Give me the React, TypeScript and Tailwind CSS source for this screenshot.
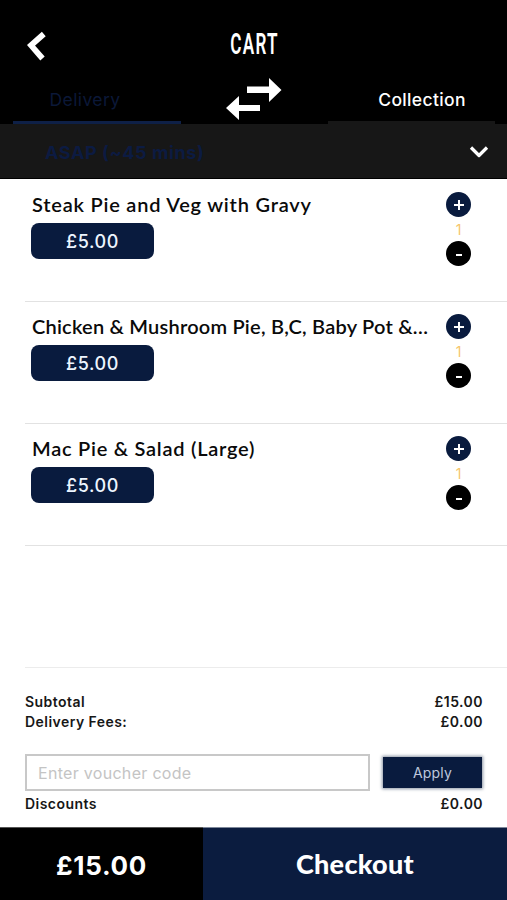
import React from "react";

type Item = { name: string; price: string; qty: number; spacing: string };

const items: Item[] = [
  { name: "Steak Pie and Veg with Gravy", price: "£5.00", qty: 1, spacing: "tracking-[0.78px]" },
  { name: "Chicken & Mushroom Pie, B,C, Baby Pot &…", price: "£5.00", qty: 1, spacing: "tracking-[0.22px]" },
  { name: "Mac Pie & Salad (Large)", price: "£5.00", qty: 1, spacing: "tracking-[0.74px]" },
];

function Header() {
  return (
    <header className="flex h-[124px] flex-col bg-black text-white">
      <div className="grid h-[76px] grid-cols-[203px_101px_203px] pt-[31px]">
        <button aria-label="Back" className="ml-[27px] h-[31px] w-[20px]">
          <svg width="20" height="31" viewBox="0 0 20 31">
            <path d="M16.800 3 4 14.300 15.500 27.500" fill="none" stroke="white" strokeWidth="5.800" />
          </svg>
        </button>
        <h1 className="flex h-[25px] items-center justify-center whitespace-nowrap font-['Roboto',sans-serif] text-[30px] leading-[25px] font-semibold">
          <span className="ml-[1px] inline-block scale-x-[0.57] tracking-[2.2px]">CART</span>
        </h1>
      </div>
      <div className="flex h-[48px] justify-between pr-[12px] pl-[13px] font-['Inter',sans-serif]">
        <button className="w-[168px] border-b-3 border-[#0e2047] pt-[5px] pr-[24px] pb-[1px] text-center text-[17.500px] tracking-[0.4px] text-[#0b1838]">
          Delivery
        </button>
        <svg className="ml-[-2px]" width="58" height="46" viewBox="0 0 58 46">
          <path d="M22 10.5h22V2l12.500 12-12.500 12v-9H22ZM35 35H14v9L1 32l13-12v9h21Z" fill="white" />
        </svg>
        <button className="w-[167px] border-b-3 border-[#171717] pt-[5px] pb-[1px] pl-[21px] text-center text-[17.500px] font-medium tracking-[0.35px]">
          Collection
        </button>
      </div>
    </header>
  );
}

function ItemRow({ item }: { item: Item }) {
  return (
    <li className="ml-[25px] flex h-[122px] justify-between border-b border-[#e2e2e2] pr-[36px] pl-[6px]">
      <div className="pt-[12px]">
        <h2 className={`h-[31px] whitespace-nowrap pl-px font-['Lato',sans-serif] text-[20px] leading-[25px] font-semibold text-[#0a0a0a] ${item.spacing}`}>
          {item.name}
        </h2>
        <div className="flex h-[36px] w-[123px] items-center justify-center rounded-[8px] bg-[#091b3e] font-['Inter',sans-serif] text-[18px] font-medium tracking-[0.6px] text-[#edf5ff]">
          {item.price}
        </div>
      </div>
      <div className="flex w-[25px] flex-col items-center pt-[12px]">
        <button aria-label="Add" className="flex size-[25px] items-center justify-center rounded-full bg-[#091b3e]">
          <svg width="12" height="12" viewBox="0 0 12 12">
            <path d="M1 6h10M6 1v10" stroke="white" strokeWidth="2" />
          </svg>
        </button>
        <span className="flex h-[24px] items-center font-['Inter',sans-serif] text-[14px] text-[#f6c66b]">{item.qty}</span>
        <button aria-label="Remove" className="flex size-[25px] items-center justify-center rounded-full bg-black pt-[2px]">
          <span className="h-[2px] w-[6px] bg-white" />
        </button>
      </div>
    </li>
  );
}

function SummaryRow({ label, value }: { label: string; value: string }) {
  return (
    <div className="flex h-[20px] items-center justify-between font-['Inter',sans-serif] text-[14px] leading-[20px] font-semibold tracking-[0.45px] text-[#171717]">
      <span>{label}</span>
      <span>{value}</span>
    </div>
  );
}

export default function App() {
  return (
    <main className="flex h-[900px] w-[507px] flex-col overflow-hidden bg-white">
      <Header />
      <div className="flex h-[55px] items-center justify-between border-b border-black bg-[#171717] pt-[2px] pr-[17px] pl-[45px]">
        <span className="font-['Inter',sans-serif] text-[18px] font-bold tracking-[0.6px] text-[#0c1b42]">ASAP (~45 mins)</span>
        <svg width="22" height="14" viewBox="0 0 22 14">
          <path d="m3 2.500 8 8 8-8" fill="none" stroke="white" strokeWidth="3.200" strokeLinejoin="round" />
        </svg>
      </div>
      <ul className="h-[489px] pt-px">
        {items.map((item) => (
          <ItemRow key={item.name} item={item} />
        ))}
        <li className="ml-[25px] h-[122px] border-b border-[#ececec]" />
      </ul>
      <section className="flex h-[159px] flex-col pt-[24px] pr-[24px] pl-[25px]">
        <SummaryRow label="Subtotal" value="£15.00" />
        <SummaryRow label="Delivery Fees:" value="£0.00" />
        <div className="mt-[22px] mb-[3px] flex h-[37px] items-center justify-between pr-px font-['Inter',sans-serif]">
          <input
            className="h-[37px] w-[345px] border-2 border-[#c8c8c8] px-[11px] text-[16px] tracking-[0.3px] placeholder:text-[#c4c4c4]"
            placeholder="Enter voucher code"
          />
          <button className="h-[31px] w-[99px] bg-[#091b3e] text-[14px] tracking-[0.2px] text-[#bdc7dd] shadow-[0_0_3px_1px_#8a94a3]">Apply</button>
        </div>
        <SummaryRow label="Discounts" value="£0.00" />
      </section>
      <footer className="flex h-[73px] text-white">
        <div className="flex w-[203px] items-center justify-center border-t border-[#555555] bg-black pt-[2px] font-['Inter',sans-serif] text-[26px] font-bold tracking-[0.7px]">£15.00</div>
        <button className="flex flex-1 items-center justify-center border-t border-[#7d8799] bg-[#0b1c3f] font-['Lato',sans-serif] text-[27px] font-black tracking-[0.3px]">Checkout</button>
      </footer>
    </main>
  );
}
